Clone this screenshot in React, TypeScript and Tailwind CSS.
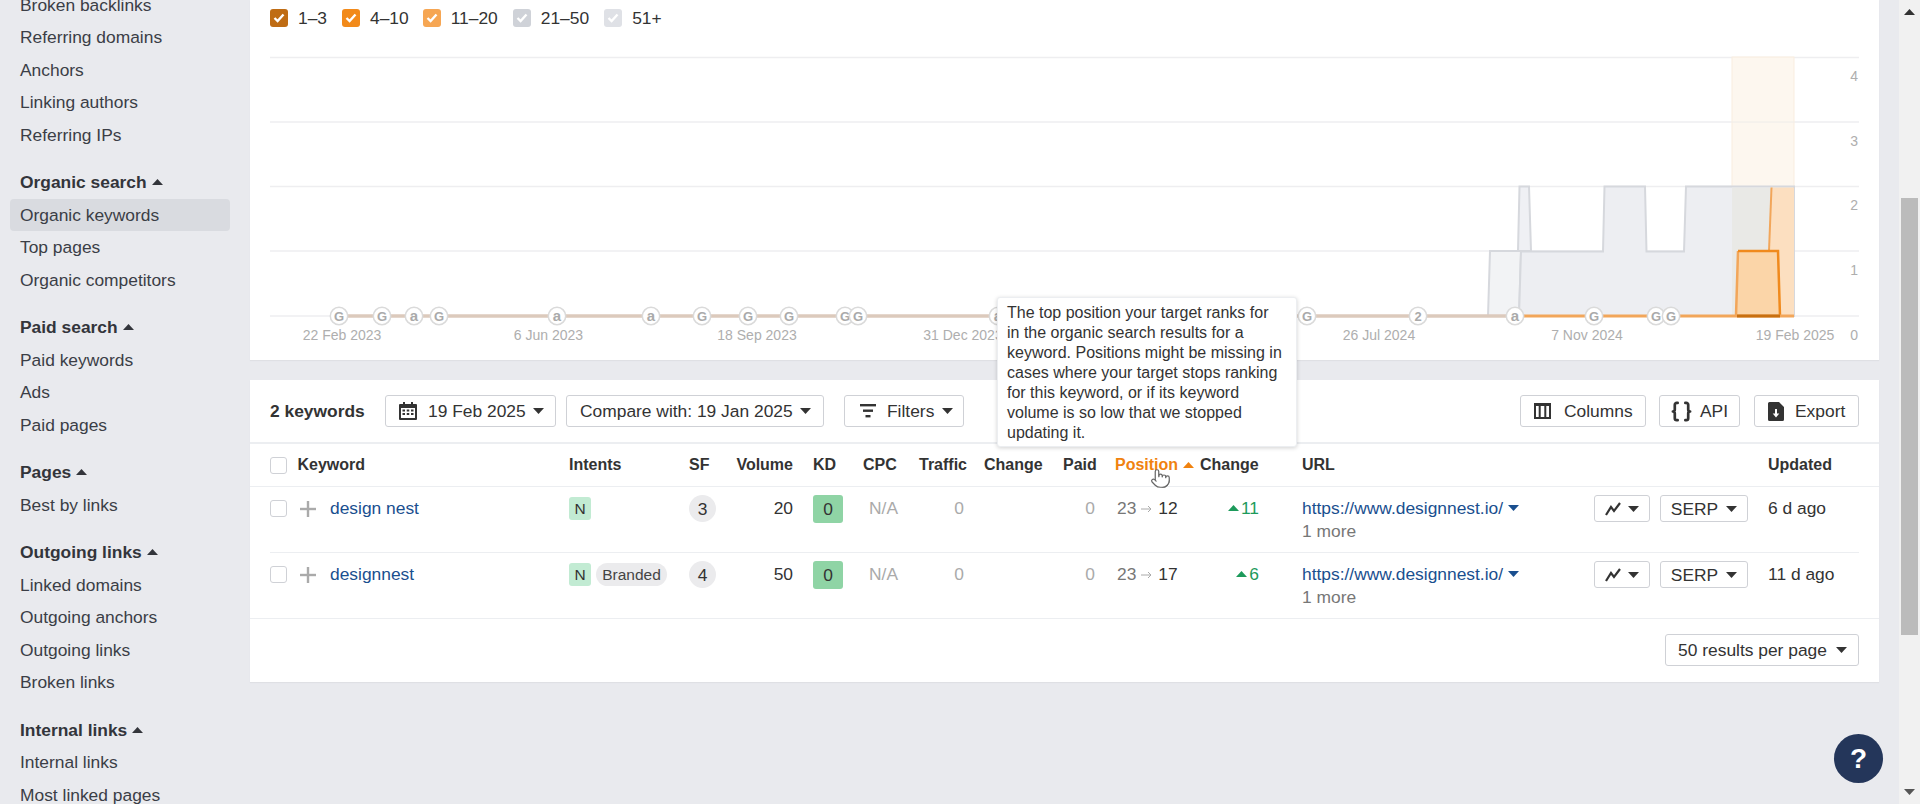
import { Braces, Pointer } from 'lucide-react';

const sections = [
  { title: null, items: ['Broken backlinks', 'Referring domains', 'Anchors', 'Linking authors', 'Referring IPs'] },
  { title: 'Organic search', items: ['Organic keywords', 'Top pages', 'Organic competitors'] },
  { title: 'Paid search', items: ['Paid keywords', 'Ads', 'Paid pages'] },
  { title: 'Pages', items: ['Best by links'] },
  { title: 'Outgoing links', items: ['Linked domains', 'Outgoing anchors', 'Outgoing links', 'Broken links'] },
  { title: 'Internal links', items: ['Internal links', 'Most linked pages'] },
];

const legend = [
  { label: '1–3', box: 'bg-[#bf6c14]', mr: 'mr-[15px]' },
  { label: '4–10', box: 'bg-[#f28a1a]', mr: 'mr-[14px]' },
  { label: '11–20', box: 'bg-[#f6a653]', mr: 'mr-[15px]' },
  { label: '21–50', box: 'bg-[#cfd2d8]', mr: 'mr-[15px]' },
  { label: '51+', box: 'bg-[#dfe1e6]', mr: '' },
];

const markers: [number, string][] = [
  [339, 'G'], [382, 'G'], [414, 'a'], [439, 'G'], [557, 'a'], [651, 'a'], [702, 'G'], [748, 'G'], [789, 'G'],
  [845, 'G'], [858, 'G'], [998, 'a'], [1307, 'G'], [1418, '2'], [1515, 'a'], [1594, 'G'], [1656, 'G'], [1671, 'G'],
];

const dates: [number, string][] = [
  [342, '22 Feb 2023'], [548.5, '6 Jun 2023'], [757, '18 Sep 2023'], [963, '31 Dec 2023'],
  [1379, '26 Jul 2024'], [1587, '7 Nov 2024'], [1795, '19 Feb 2025'],
];

const tooltipLines = [
  'The top position your target ranks for',
  'in the organic search results for a',
  'keyword. Positions might be missing in',
  'cases where your target stops ranking',
  'for this keyword, or if its keyword',
  'volume is so low that we stopped',
  'updating it.',
];

const rows = [
  { keyword: 'design nest', branded: false, sf: 3, volume: 20, to: 12, change: 11, updated: '6 d ago' },
  { keyword: 'designnest', branded: true, sf: 4, volume: 50, to: 17, change: 6, updated: '11 d ago' },
];

const gridCols =
  'grid grid-cols-[299px_120px_44px_60px_70px_56px_65px_79px_52px_85px_102px_466px_91px]';

function Caret({ up = false, className = 'fill-[#333]' }: { up?: boolean; className?: string }) {
  return (
    <svg width="11" height="6" viewBox="0 0 11 6" className={`shrink-0 ${className}`}>
      <polygon points={up ? '0,6 5.5,0 11,6' : '0,0 11,0 5.5,6'} />
    </svg>
  );
}

function Check() {
  return (
    <svg width="12" height="10" viewBox="0 0 12 10" fill="none" stroke="white" strokeWidth="2.4">
      <path d="M1.5 5 L4.6 8 L10.5 1.5" />
    </svg>
  );
}

function Checkbox() {
  return <span className="block h-[17px] w-[17px] rounded-[3px] border border-[#cfd1d6] bg-white" />;
}

function Button({ children, className = '' }: { children: React.ReactNode; className?: string }) {
  return (
    <button className={`flex h-[32px] items-center rounded-[3px] border border-[#cfd1d6] bg-white text-[#333] ${className}`}>
      {children}
    </button>
  );
}

function Sidebar() {
  return (
    <aside className="mt-[-11.5px] w-[250px] shrink-0 pl-[10px] pr-[20px] text-[17.4px] text-[#3b3e46]">
      {sections.map((section, i) => (
        <div key={i} className={i > 0 ? 'mt-[15px]' : ''}>
          {section.title && (
            <div className="flex h-[32.5px] items-center gap-[5px] px-[10px] font-bold text-[#33353b]">
              {section.title}
              <Caret up className="fill-[#33353b]" />
            </div>
          )}
          {section.items.map((item) => (
            <div
              key={item}
              className={`flex h-[32.5px] items-center rounded-[4px] px-[10px] ${
                item === 'Organic keywords' ? 'bg-[#d9dbe0]' : ''
              }`}
            >
              {item}
            </div>
          ))}
        </div>
      ))}
    </aside>
  );
}

function Chart() {
  return (
    <svg width="1629" height="324" viewBox="250 36 1629 324" className="block font-['Liberation_Sans',sans-serif]">
      {[57.5, 122, 186.5, 251, 316].map((y) => (
        <line key={y} x1="270" x2="1859" y1={y} y2={y} stroke="#eeeef0" strokeWidth="1.5" />
      ))}
      <rect x="1732" y="57" width="62" height="259" fill="#fdf6ec" stroke="#f9eddf" fillOpacity="0.85" />
      {[122, 186.5].map((y) => (
        <line key={y} x1="1732" x2="1794" y1={y} y2={y} stroke="#f0eeea" strokeWidth="1" />
      ))}
      <path d="M1488 316 L1490 251 L1521 251 L1519 316 Z" fill="#f2f3f5" stroke="#d6d8dd" strokeWidth="2" />
      <path d="M1518 251 L1519.5 186.5 L1529 186.5 L1531 251 Z" fill="#eff0f4" stroke="#d6d8dd" strokeWidth="2" />
      <path
        d="M1519 316 L1521 251.5 L1603 251.5 L1604.5 186.5 L1645 186.5 L1646.5 251.5 L1684 251.5 L1686 186.5 L1794 186.5 L1794 316 Z"
        fill="#edeef2"
        stroke="#d6d8dd"
        strokeWidth="2"
      />
      <rect x="1732" y="187.5" width="40" height="128" fill="#e9e9e6" />
      <path d="M1769 251 L1771.5 187.5 L1794 187.5 L1794 316 L1769 316 Z" fill="#fcdfc0" />
      <path d="M1769 251 L1771.5 187.5" stroke="#f2a65a" strokeWidth="2" fill="none" />
      <path d="M1736 316 L1738 251 L1778 251 L1780 316 Z" fill="#fbd5a8" />
      <path d="M1736 316 L1738 251" stroke="#f2a65a" strokeWidth="2.5" fill="none" />
      <path d="M1738 251 L1778 251 L1780 316" stroke="#f08a1d" strokeWidth="2.5" fill="none" />
      <line x1="339" x2="1515" y1="316" y2="316" stroke="#dccabc" strokeWidth="3.5" />
      <line x1="1515" x2="1794" y1="316" y2="316" stroke="#f2a65a" strokeWidth="3" />
      <line x1="1737" x2="1780" y1="316" y2="316" stroke="#c87010" strokeWidth="3" />
      {markers.map(([x, glyph]) => (
        <g key={x}>
          <circle cx={x} cy="316" r="8.7" fill="white" stroke="#dadada" strokeWidth="1.5" />
          <text x={x} y="320.5" textAnchor="middle" fontSize={glyph === 'a' ? 15 : 13} fontWeight="700" fill="#aaaaaa">
            {glyph}
          </text>
        </g>
      ))}
      {dates.map(([x, date]) => (
        <text key={date} x={x} y="340" textAnchor="middle" fontSize="14" fill="#aeaeae">
          {date}
        </text>
      ))}
      {[[4, 81], [3, 146], [2, 210], [1, 275], [0, 340]].map(([n, y]) => (
        <text key={n} x="1858" y={y} textAnchor="end" fontSize="14" fill="#aeaeae">
          {n}
        </text>
      ))}
    </svg>
  );
}

function Toolbar() {
  return (
    <div className="flex h-[62px] items-center px-5 text-[17.4px]">
      <span className="mr-[20px] w-[95px] whitespace-nowrap font-bold text-[#333]">2 keywords</span>
      <Button className="mr-[10px] w-[171px] pl-[13px]">
        <svg width="18" height="18" viewBox="0 0 18 18" className="mr-[11px] fill-[#333]">
          <path fillRule="evenodd" d="M4 0h2v2h6V0h2v2h3a1 1 0 0 1 1 1v14a1 1 0 0 1-1 1H1a1 1 0 0 1-1-1V3a1 1 0 0 1 1-1h3zM2 6v10h14V6zm1.5 1.5h2.5v2H3.500zm4.250 0h2.500v2h-2.500zm4.250 0h2.500v2H12zM3.500 11h2.500v2H3.500zm4.250 0h2.500v2h-2.500zm4.250 0h2.500v2H12z" />
        </svg>
        <span className="mr-[7px] whitespace-nowrap">19 Feb 2025</span>
        <Caret />
      </Button>
      <Button className="mr-[20px] w-[258px] pl-[13px]">
        <span className="mr-[7px] whitespace-nowrap">Compare with: 19 Jan 2025</span>
        <Caret />
      </Button>
      <Button className="w-[120px] pl-[15px]">
        <svg width="16" height="14" viewBox="0 0 16 14" className="mr-[11px] fill-[#333]">
          <rect x="0" y="0" width="16" height="2.400" />
          <rect x="3" y="5.500" width="10" height="2.400" />
          <rect x="5.500" y="11" width="5" height="2.400" />
        </svg>
        <span className="mr-[8px]">Filters</span>
        <Caret />
      </Button>
      <Button className="ml-auto mr-[13px] w-[126px] pl-[13px]">
        <svg width="17" height="16" viewBox="0 0 17 16" className="mr-[13px] fill-[#333]">
          <path fillRule="evenodd" d="M0 0h17v16H0zM2 3v11h2.700V3zm4.700 0v11h3.600V3zm5.600 0v11H15V3z" />
        </svg>
        Columns
      </Button>
      <Button className="mr-[14px] w-[81px] pl-[10px]">
        <Braces size={23} strokeWidth={2.8} className="mr-[7px] text-[#333]" />
        API
      </Button>
      <Button className="w-[105px] pl-[13px]">
        <svg width="16" height="19" viewBox="0 0 16 19" className="mr-[11px] fill-[#333]">
          <path fillRule="evenodd" d="M1.500 0H11l5 5v12.500a1.500 1.500 0 0 1-1.500 1.500h-13A1.500 1.500 0 0 1 0 17.500v-16A1.500 1.500 0 0 1 1.500 0zM7 7v4.500H4.700L8 15.500l3.300-4H9V7z" />
        </svg>
        Export
      </Button>
    </div>
  );
}

function TableHeader() {
  return (
    <div className="border-y border-t-2 border-[#eceef1] px-5">
      <div className={`${gridCols} h-[42px] items-center text-[16px] font-bold text-[#333]`}>
        <div className="flex items-center gap-[10.5px]">
          <Checkbox />
          Keyword
        </div>
        <div>Intents</div>
        <div>SF</div>
        <div className="text-right">Volume</div>
        <div className="pl-[20px]">KD</div>
        <div>CPC</div>
        <div>Traffic</div>
        <div>Change</div>
        <div>Paid</div>
        <div className="flex items-center gap-[5px] text-[#f0820f]">
          Position
          <Caret up className="fill-[#f0820f]" />
        </div>
        <div>Change</div>
        <div>URL</div>
        <div>Updated</div>
      </div>
    </div>
  );
}

function Row({ row }: { row: (typeof rows)[number] }) {
  return (
    <div className={`${gridCols} h-[65px] pt-[8px] text-[17.4px] leading-[26px] text-[#333]`}>
      <div className="flex items-start">
        <span className="mt-[5px]">
          <Checkbox />
        </span>
        <svg width="16" height="16" viewBox="0 0 16 16" className="ml-[13px] mr-[14px] mt-[6px] fill-[#aaa]">
          <rect x="6.800" y="0" width="2.400" height="16" />
          <rect x="0" y="6.800" width="16" height="2.400" />
        </svg>
        <span className="text-[#1a4f8f]">{row.keyword}</span>
      </div>
      <div className="flex items-start gap-[5px]">
        <span className="mt-[2px] flex h-[23px] w-[22px] items-center justify-center rounded-[3px] bg-[#c2ebd3] text-[15.500px]">
          N
        </span>
        {row.branded && (
          <span className="mt-[2px] flex h-[23px] w-[71px] items-center justify-center rounded-full bg-[#ebebed] text-[15.500px] text-[#444]">
            Branded
          </span>
        )}
      </div>
      <div>
        <span className="flex h-[27px] w-[27px] items-center justify-center rounded-full bg-[#ebebed]">{row.sf}</span>
      </div>
      <div className="text-right">{row.volume}</div>
      <div className="pl-[20px]">
        <span className="flex h-[28px] w-[30px] items-center justify-center rounded-[3px] bg-[#8fd4a5]">0</span>
      </div>
      <div className="pl-[6px] text-[#aaa]">N/A</div>
      <div className="pr-[20px] text-right text-[#aaa]">0</div>
      <div />
      <div className="pr-[20px] text-right text-[#aaa]">0</div>
      <div className="flex items-start pl-[2px]">
        <span className="text-[#777]">23</span>
        <svg width="11" height="8" viewBox="0 0 11 8" className="ml-[5px] mr-[6px] mt-[10px] fill-none stroke-[#aaa]">
          <path d="M0 4h10M7 1l3 3-3 3" />
        </svg>
        <span>{row.to}</span>
      </div>
      <div className="flex w-[59px] items-start justify-end gap-[2px] text-[#1d9a5b]">
        <Caret up className="mt-[10px] fill-[#1d9a5b]" />
        {row.change}
      </div>
      <div className="flex items-start justify-between pr-[20px]">
        <div>
          <div className="flex items-center gap-[5px] text-[#1a4f8f]">
            https://www.designnest.io/
            <Caret className="fill-[#1a4f8f]" />
          </div>
          <div className="leading-[20px] text-[#777]">1 more</div>
        </div>
        <div className="flex gap-[10px]">
          <button className="flex h-[27px] w-[56px] items-center justify-center gap-[7px] rounded-[3px] border border-[#cfd1d6]">
            <svg width="16" height="14" viewBox="0 0 16 14" fill="none" stroke="#333" strokeWidth="2.200">
              <path d="M1 13 L6 5 L9 9 L15 1" />
            </svg>
            <Caret />
          </button>
          <button className="flex h-[27px] w-[88px] items-center justify-center gap-[8px] rounded-[3px] border border-[#cfd1d6]">
            SERP
            <Caret />
          </button>
        </div>
      </div>
      <div>{row.updated}</div>
    </div>
  );
}

export default function App() {
  return (
    <div className="relative flex h-[804px] overflow-hidden bg-[#e9eaee] font-['Liberation_Sans',sans-serif]">
      <Sidebar />
      <main className="w-[1649px] shrink-0 pr-[20px]">
        <section className="h-[360px] bg-white shadow-[0_1px_1px_#dfe0e4]">
          <div className="flex h-[36px] items-center px-5 text-[17.4px] text-[#333]">
            {legend.map((item) => (
              <label key={item.label} className={`flex items-center gap-[10px] ${item.mr}`}>
                <span className={`flex h-[18px] w-[18px] items-center justify-center rounded-[3px] ${item.box}`}>
                  <Check />
                </span>
                {item.label}
              </label>
            ))}
          </div>
          <Chart />
        </section>
        <section className="mt-[20px] h-[302px] bg-white shadow-[0_1px_1px_#dfe0e4]">
          <Toolbar />
          <TableHeader />
          <div className="px-5">
            <div className="border-b border-[#eceef1]">
              <Row row={rows[0]} />
            </div>
          </div>
          <div className="border-b border-[#eceef1] px-5">
            <Row row={rows[1]} />
          </div>
          <div className="flex justify-end px-5 pt-[15px]">
            <Button className="w-[194px] justify-center gap-[9px] pl-[1px] text-[17.4px]">
              50 results per page
              <Caret />
            </Button>
          </div>
        </section>
      </main>
      <div className="flex w-[21px] flex-col items-center bg-[#f1f1f1] pt-[9px]">
        <Caret up className="fill-[#333]" />
        <div className="mt-[183px] h-[437px] w-[17px] bg-[#bbbbbb]" />
        <div className="mt-auto mb-[9px]">
          <Caret className="fill-[#555]" />
        </div>
      </div>

      {/* Tooltip and overlays */}
      <div className="absolute left-[997px] top-[297px] h-[150px] w-[300px] whitespace-nowrap rounded-[3px] border border-[#eceef1] bg-white pl-[9px] pt-[5px] text-[16px] leading-[20px] text-[#333] shadow-[0_1px_4px_rgba(0,0,0,0.18)]">
        {tooltipLines.map((line) => (
          <div key={line}>{line}</div>
        ))}
      </div>
      <Pointer size={21} strokeWidth={1.4} className="absolute left-[1150px] top-[468px] fill-white text-[#666]" />
      <div className="absolute left-[1834px] top-[734px] flex h-[49px] w-[49px] items-center justify-center rounded-full bg-[#24365a] text-[28px] font-bold text-white">
        ?
      </div>
    </div>
  );
}
